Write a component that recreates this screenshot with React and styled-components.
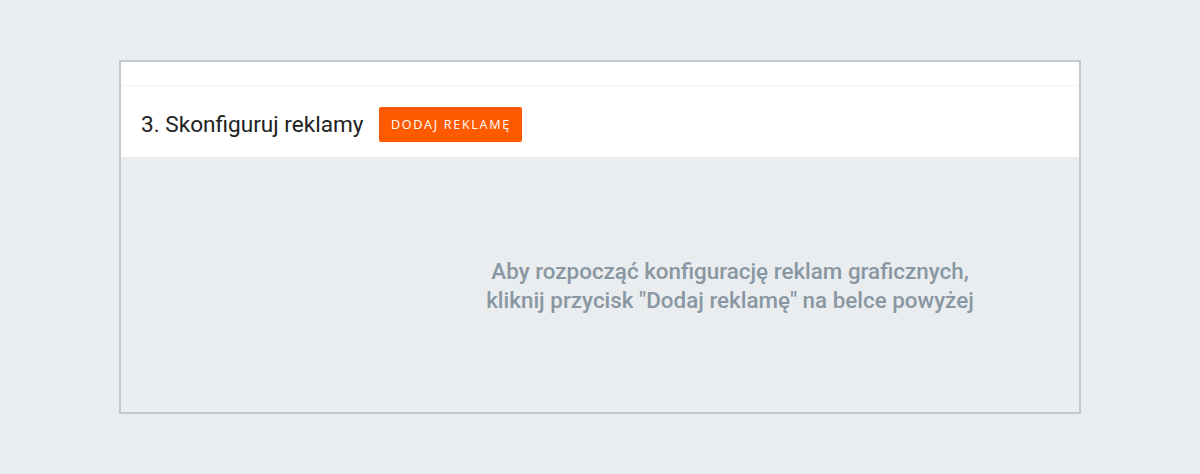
import styled, { createGlobalStyle } from "styled-components"

const Global = createGlobalStyle`
  html, body {
    margin: 0;
    padding: 0;
    background: #e9edf0;
    font-family: Roboto, "Liberation Sans", sans-serif;
  }
`

const Page = styled.div`
  padding: 60px 119px 0 119px;
  height: 474px;
  box-sizing: border-box;
`

const Panel = styled.section`
  border: 2px solid #c5c8cb;
  background: #fff;
  display: flex;
  flex-direction: column;
`

const TopStrip = styled.div`
  height: 23px;
  border-bottom: 1px solid #f1f3f5;
`

const Header = styled.div`
  display: flex;
  align-items: center;
  gap: 16px;
  height: 71px;
  box-sizing: border-box;
  padding: 6px 20px 0 20px;
`

const Title = styled.h2`
  margin: 0;
  font-size: 22.6px;
  font-weight: 400;
  color: #212121;
`

const AddButton = styled.button`
  border: none;
  border-radius: 2px;
  background: #ff5a00;
  color: #fff;
  font-family: "Open Sans", sans-serif;
  font-size: 12.6px;
  letter-spacing: 1.7px;
  height: 35px;
  width: 143px;
  padding: 0;
  cursor: pointer;
`

const Body = styled.div`
  background: #e9edf0;
  height: 255px;
  display: flex;
  align-items: center;
  justify-content: center;
  padding-left: 260px;
`

const Hint = styled.p`
  margin: 0;
  text-align: center;
  font-size: 22.4px;
  font-weight: 500;
  line-height: 29px;
  color: #8997a2;
  padding-top: 3px;
`

const App = () => {
    return (
        <>
            <Global />
            <Page>
                <Panel>
                    <TopStrip />
                    <Header>
                        <Title>3. Skonfiguruj reklamy</Title>
                        <AddButton>DODAJ REKLAMĘ</AddButton>
                    </Header>
                    <Body>
                        <Hint>
                            Aby rozpocząć konfigurację reklam graficznych,<br />
                            kliknij przycisk "Dodaj reklamę" na belce powyżej
                        </Hint>
                    </Body>
                </Panel>
            </Page>
        </>
    )
}

export default App
